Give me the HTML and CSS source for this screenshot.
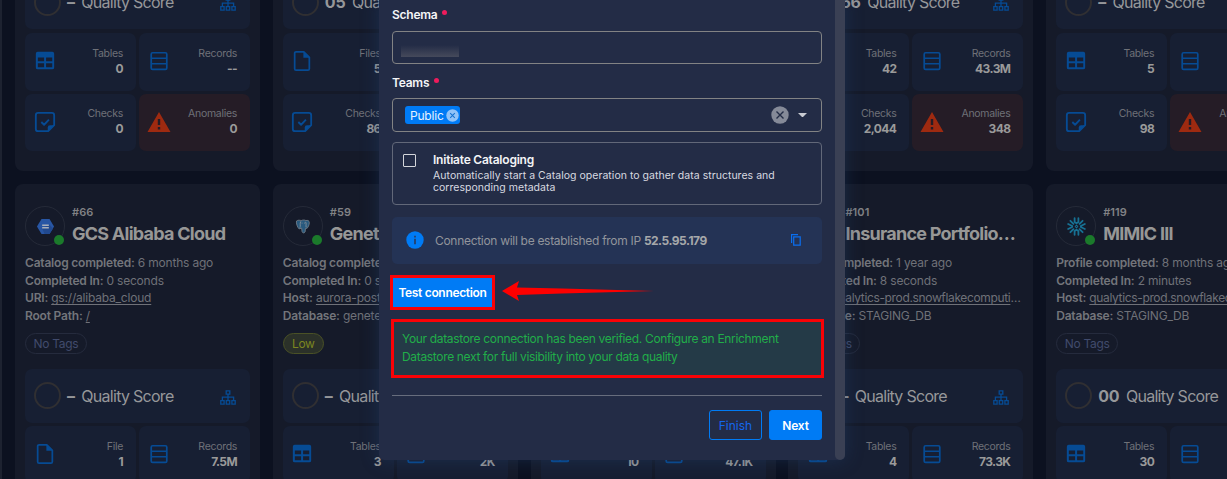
FILE: index.html
```
<!DOCTYPE html>
<html lang="en">
<head>
<meta charset="utf-8">
<title>Datastores</title>
<link rel="stylesheet" href="styles.css">
</head>
<body>
<svg class="defs" aria-hidden="true">
  <symbol id="i-table" viewBox="0 0 24 24"><path fill-rule="evenodd" d="M4.500 2h15.500A2 2 0 0 1 22 4v15a2 2 0 0 1-2 2H4a2 2 0 0 1-2-2V4a2 2 0 0 1 2-2zM4.200 8.200v4.200h6.800V8.200zM13.200 8.200v4.200h6.700V8.200zM4.200 14.500v4.200h6.800v-4.200zM13.200 14.500v4.200h6.700v-4.200z"/></symbol>
  <symbol id="i-rows" viewBox="0 0 24 24"><path fill="none" stroke="currentColor" stroke-width="1.900" d="M5 3h14a1.500 1.500 0 0 1 1.500 1.500v15.200a1.500 1.500 0 0 1-1.500 1.500H5a1.500 1.500 0 0 1-1.500-1.500V4.500A1.500 1.500 0 0 1 5 3zM3.500 9h17M3.500 15h17"/></symbol>
  <symbol id="i-file" viewBox="0 0 24 24"><path fill="none" stroke="currentColor" stroke-width="1.900" stroke-linejoin="round" d="M5.500 2h8.500l6 6v12.500a1.500 1.500 0 0 1-1.500 1.500h-13A1.500 1.500 0 0 1 4 20.500v-17A1.500 1.500 0 0 1 5.500 2z"/><path d="M13.500 2v6.500H20z"/></symbol>
  <symbol id="i-check" viewBox="0 0 24 24"><path fill="none" stroke="currentColor" stroke-width="2" stroke-linejoin="round" d="M15.500 22H4.500A2.500 2.500 0 0 1 2 19.500v-15A2.500 2.500 0 0 1 4.500 2h15A2.500 2.500 0 0 1 22 4.500v11zM8 12l3 3 5.300-5.500"/><path d="M15 22.500v-4.500a2.500 2.500 0 0 1 2.500-2.500H22.500z"/></symbol>
  <symbol id="i-warn" viewBox="0 0 24 24"><path fill-rule="evenodd" d="M12 2l11.500 20H.5zM10.800 9v6h2.400V9zM10.800 17v2.400h2.400V17z"/></symbol>
  <symbol id="i-tree" viewBox="0 0 16 15"><path fill="none" stroke="currentColor" stroke-width="1.300" d="M6.200.8h3.600v3.400H6.200zM.8 10.700h3.300v3.400H.8zM6.300 10.700h3.400v3.400H6.300zM11.900 10.700h3.300v3.400h-3.300zM8 4.200v6.500M2.400 10.700V7.200h11.200v3.500"/></symbol>
</svg>
<div class="screen">
  <main class="board">
    <div class="row row-top">
      <section class="card">
        <div class="score"><i class="ring"></i><b>–</b><span>Quality Score</span><svg><use href="#i-tree"/></svg></div>
        <div class="cells">
          <div class="cell"><svg><use href="#i-table"/></svg><p>Tables<b>0</b></p></div>
          <div class="cell"><svg><use href="#i-rows"/></svg><p>Records<b>--</b></p></div>
          <div class="cell"><svg><use href="#i-check"/></svg><p>Checks<b>0</b></p></div>
          <div class="cell bad"><svg><use href="#i-warn"/></svg><p>Anomalies<b>0</b></p></div>
        </div>
      </section>
      <section class="card">
        <div class="score"><i class="ring"></i><b>05</b><span>Quality Score</span></div>
        <div class="cells">
          <div class="cell"><svg><use href="#i-file"/></svg><p>Files<b>5</b></p></div>
          <div class="cell"></div>
          <div class="cell"><svg><use href="#i-check"/></svg><p>Checks<b>86</b></p></div>
          <div class="cell bad"></div>
        </div>
      </section>
      <section class="card"></section>
      <section class="card">
        <div class="score"><i class="ring"></i><b>66</b><span>Quality Score</span><svg><use href="#i-tree"/></svg></div>
        <div class="cells">
          <div class="cell"><svg><use href="#i-table"/></svg><p>Tables<b>42</b></p></div>
          <div class="cell"><svg><use href="#i-rows"/></svg><p>Records<b>43.3M</b></p></div>
          <div class="cell"><svg><use href="#i-check"/></svg><p>Checks<b>2,044</b></p></div>
          <div class="cell bad"><svg><use href="#i-warn"/></svg><p>Anomalies<b>348</b></p></div>
        </div>
      </section>
      <section class="card">
        <div class="score"><i class="ring"></i><b>–</b><span>Quality Score</span></div>
        <div class="cells">
          <div class="cell"><svg><use href="#i-table"/></svg><p>Tables<b>5</b></p></div>
          <div class="cell"><svg><use href="#i-rows"/></svg></div>
          <div class="cell"><svg><use href="#i-check"/></svg><p>Checks<b>98</b></p></div>
          <div class="cell bad"><svg><use href="#i-warn"/></svg><p>Anomalies<b>&nbsp;</b></p></div>
        </div>
      </section>
    </div>
    <div class="row">
      <section class="card">
        <header><div class="avatar"><svg viewBox="0 0 20 20"><path fill="#2856a4" d="M5.800 2h8.400L19 10l-4.800 8H5.800L1 10z"/><path fill="#21498f" d="M14 8l4 4-3.800 6H9L6.500 12z"/><path fill="#a9afba" d="M6.500 8h7v1.600h-7zM6.500 10.400h7V12h-7z"/></svg><i></i></div><div class="name"><small>#66</small><h2>GCS Alibaba Cloud</h2></div></header>
        <ul><li><b>Catalog completed:</b> 6 months ago</li><li><b>Completed In:</b> 0 seconds</li><li><b>URI:</b> <u>gs://alibaba_cloud</u></li><li><b>Root Path:</b> <u>/</u></li></ul>
        <span class="tag">No Tags</span>
        <div class="score"><i class="ring"></i><b>–</b><span>Quality Score</span><svg><use href="#i-tree"/></svg></div>
        <div class="cells">
          <div class="cell"><svg><use href="#i-file"/></svg><p>File<b>1</b></p></div>
          <div class="cell"><svg><use href="#i-rows"/></svg><p>Records<b>7.5M</b></p></div>
        </div>
      </section>
      <section class="card">
        <header><div class="avatar"><svg class="elephant" viewBox="0 0 20 20"><path fill="#28597e" stroke="#75808a" stroke-width="1" d="M3 3.500c2-1.500 4-.8 5.500-.5 2-.8 4-.8 5.500 0 2-.6 4 0 4 2.500 0 3-1.500 5-2.500 6.500l-2 .3-.5 4.200c-1 1.500-3 1.300-3.500-.5L9 12l-3 .8C4 11 2.300 6 3 3.500z"/><path fill="none" stroke="#8d9399" stroke-width="1" d="M8 4C6.500 7 8 9 7 11.500M13.500 4.500c1.500 2 .2 4 .8 6.500M9 6h1M12 6h1"/></svg><i></i></div><div class="name"><small>#59</small><h2>Genetech</h2></div></header>
        <ul><li><b>Catalog completed:</b></li><li><b>Completed In:</b> 0 seconds</li><li><b>Host:</b> <u>aurora-postgres</u></li><li><b>Database:</b> genetech</li></ul>
        <span class="tag low">Low</span>
        <div class="score"><i class="ring"></i><b>–</b><span>Quality Score</span></div>
        <div class="cells">
          <div class="cell"><svg><use href="#i-table"/></svg><p>Tables<b>3</b></p></div>
          <div class="cell"><svg><use href="#i-rows"/></svg><p>Records<b>2K</b></p></div>
        </div>
      </section>
      <section class="card end">
        <div class="cells">
          <div class="cell"><svg><use href="#i-table"/></svg><p>Tables<b>10</b></p></div>
          <div class="cell"><svg><use href="#i-rows"/></svg><p>Records<b>47.1K</b></p></div>
        </div>
      </section>
      <section class="card">
        <header><div class="avatar"></div><div class="name"><small>#101</small><h2>Insurance Portfolio…</h2></div></header>
        <ul><li><b>Scan completed:</b> 1 year ago</li><li><b>Completed In:</b> 8 seconds</li><li class="host"><b>Host:</b> <u>qualytics-prod.snowflakecomputi</u>…</li><li><b>Database:</b> STAGING_DB</li></ul>
        <span class="tag">No Tags</span>
        <div class="score"><i class="ring"></i><b>–</b><span>Quality Score</span><svg><use href="#i-tree"/></svg></div>
        <div class="cells">
          <div class="cell"><svg><use href="#i-table"/></svg><p>Tables<b>4</b></p></div>
          <div class="cell"><svg><use href="#i-rows"/></svg><p>Records<b>73.3K</b></p></div>
        </div>
      </section>
      <section class="card">
        <header><div class="avatar"><svg viewBox="0 0 20 20"><g fill="none" stroke="#177194" stroke-width="1.900" stroke-linecap="round" stroke-linejoin="round"><path d="M10 8.600l1.400 1.400-1.400 1.400L8.600 10z" stroke-width="1.100"/><path d="M8 1.200v4L10 6.600l2-1.400v-4M8 18.800v-4l2-1.400 2 1.400v4M1.200 7.400l4.300 2.100v1l-4.300 2.100M18.800 7.400l-4.300 2.100v1l4.300 2.100M3.600 4l3.200 3.200M16.400 4l-3.200 3.200M3.600 16l3.200-3.200M16.400 16l-3.200-3.200"/></g></svg><i></i></div><div class="name"><small>#119</small><h2>MIMIC III</h2></div></header>
        <ul><li><b>Profile completed:</b> 8 months ago</li><li><b>Completed In:</b> 2 minutes</li><li class="host"><b>Host:</b> <u>qualytics-prod.snowflakecomputi</u>…</li><li><b>Database:</b> STAGING_DB</li></ul>
        <span class="tag">No Tags</span>
        <div class="score"><i class="ring"></i><b>00</b><span>Quality Score</span></div>
        <div class="cells">
          <div class="cell"><svg><use href="#i-table"/></svg><p>Tables<b>30</b></p></div>
          <div class="cell"><svg><use href="#i-rows"/></svg></div>
        </div>
      </section>
    </div>
  </main>

  <div class="modal">
    <div class="form">
      <label class="schema">Schema<i></i></label>
      <div class="input"><span class="redacted"></span></div>
      <label class="teams">Teams<i></i></label>
      <div class="select">
        <span class="chip">Public<svg viewBox="0 0 14 14"><circle cx="7" cy="7" r="6.700" fill="#91c3f8"/><path d="M4.500 4.500l5 5M9.500 4.500l-5 5" stroke="#1673d0" stroke-width="1.100"/></svg></span>
        <svg class="clear" viewBox="0 0 18 18"><circle cx="9" cy="9" r="8.700" fill="#858a98"/><path d="M5.500 5.500l7 7M12.500 5.500l-7 7" stroke="#232c46" stroke-width="1.400"/></svg>
        <svg class="caret" viewBox="0 0 10 5"><path d="M0 0h10L5 5z" fill="#c9cbd2"/></svg>
      </div>
      <div class="option"><i class="box"></i><div><strong>Initiate Cataloging</strong><p>Automatically start a Catalog operation to gather data structures and<br>corresponding metadata</p></div></div>
      <div class="info">
        <svg class="dot" viewBox="0 0 18 18"><circle cx="9" cy="9" r="8.700" fill="#007bf5"/><path d="M8.100 7.800h1.800v5.400H8.100zM8.100 4.700h1.800v1.800H8.100z" fill="#23406f"/></svg>
        <span>Connection will be established from IP <b>52.5.95.179</b></span>
        <svg class="copy" viewBox="0 0 10 12"><path d="M.6 9V.6H7M2.700 2.800h6.500v8.400H2.700z" fill="none" stroke="#0a6ff0" stroke-width="1.200"/></svg>
      </div>
      <div class="action">
        <button class="test">Test connection</button>
        <svg class="arrow" viewBox="0 0 152 20"><path d="M0 10L17 0l-2 6.500L60 7.500l92 2.500-92 2.500L15 14l2 6z" fill="#fe0000"/></svg>
      </div>
      <div class="verified">Your datastore connection has been verified. Configure an Enrichment<br>Datastore next for full visibility into your data quality</div>
      <footer><button class="ghost">Finish</button><button class="next">Next</button></footer>
    </div>
    <div class="scrollbar"></div>
  </div>
</div>
</body>
</html>
```
FILE: styles.css
```
* { box-sizing: border-box; margin: 0; padding: 0; }
body { width: 1227px; height: 479px; overflow: hidden; background: #0c1120; font-family: Inter, sans-serif; }
.defs { display: none; }
svg { display: block; flex: none; fill: currentColor; }
.screen { position: relative; height: 479px; overflow: hidden; border-left: 2px solid #1d2230; white-space: nowrap; }

/* datastore cards, dimmed behind the dialog */
.board { display: flex; flex-direction: column; gap: 13px; padding-left: 13px; color: #6f7178; }
.row { display: grid; grid-template-columns: repeat(5, 245px); column-gap: 12.8px; height: 320px; }
.row-top { height: 171px; }
.card { background: #151a29; border-radius: 8px; padding: 22px 10px 0; }
.row-top .card { display: flex; flex-direction: column; justify-content: flex-end; padding: 0 10px 20px; border-radius: 0 0 8px 8px; min-height: 0; }
.card.end { padding-top: 239px; }
.card header { display: flex; gap: 7px; height: 40px; }
.avatar { position: relative; flex: none; display: grid; place-items: center; width: 40px; height: 40px; border: 1px solid #252a38; border-radius: 50%; }
.avatar svg { width: 19px; height: 19px; }
.avatar .elephant { width: 17px; height: 17px; }
.avatar i { position: absolute; right: 0; bottom: 0; width: 10px; height: 10px; border-radius: 50%; background: #1b7a2b; }
.name small { display: block; font-size: 11px; line-height: 13px; font-weight: 600; color: #818285; letter-spacing: .1px; }
.name h2 { margin-top: 3px; font-size: 18px; line-height: 24px; font-weight: 700; letter-spacing: -.75px; color: #979796; }
ul { list-style: none; margin-top: 8px; font-size: 12px; line-height: 17.7px; letter-spacing: -.2px; }
li b { font-weight: 600; color: #73757b; }
.host u { letter-spacing: -.35px; }
u { text-underline-offset: 2px; }
.tag { display: block; width: 62px; height: 21px; margin: 8px 0 15px; border: 1px solid #252b3d; border-radius: 11px; font-size: 12px; line-height: 19px; letter-spacing: -.3px; text-align: center; color: #414b6c; }
.low { width: 41px; background: #2b3129; border-color: #4a5126; color: #7c8620; }
.score { display: flex; align-items: center; flex: none; height: 54px; padding: 0 14px 0 9px; border-radius: 7px; background: #171f33; font-size: 16px; color: #96979a; letter-spacing: -.72px; }
.score b { margin: 0 6.500px 0 6px; font-weight: 700; letter-spacing: -.2px; }
.ring { width: 27px; height: 27px; border: 2px solid #302f32; border-radius: 50%; }
.score svg { width: 16px; height: 15px; margin: 3px 0 0 auto; color: #064b94; }
.cells { display: grid; grid-template-columns: 111px 111px; gap: 3px; margin-top: 3px; }
.row-top .cells { margin-top: 4px; }
.cell { display: flex; align-items: center; justify-content: space-between; height: 57.500px; padding: 0 13px 0 8.500px; border-radius: 7px; background: #171f33; }
.cell svg { width: 22px; height: 22px; margin-bottom: 1px; color: #064b94; }
.cell p { text-align: right; font-size: 10.500px; line-height: 15px; letter-spacing: -.3px; padding-bottom: 1px; }
.cell b { display: block; font-size: 12px; line-height: 16px; color: #9a9a9a; letter-spacing: -.6px; }
.bad { padding-left: 8px; background: #251c26; }
.bad svg { width: 24px; height: 24px; color: #9e2a10; }

/* connection dialog */
.modal { position: absolute; left: 377px; top: 0; display: flex; width: 466px; height: 460px; background: #232c46; border-radius: 0 0 5px 5px; box-shadow: 0 0 18px rgba(33, 66, 115, .42); }
.form { width: 456px; padding: 7px 13px 0; }
.scrollbar { width: 10px; background: #3a4054; border-radius: 0 0 5px 5px; }
label { display: flex; gap: 5px; height: 24px; font-size: 12px; line-height: 16px; font-weight: 600; letter-spacing: -.25px; color: #f4f5f7; }
label i { width: 5px; height: 5px; margin-top: 3px; border-radius: 50%; background: #ef1b5c; }
.teams { height: 23px; margin-top: 11px; }
.input, .select { display: flex; height: 33px; border: 1px solid #828384; border-radius: 4px; }
.redacted { width: 58px; height: 12px; margin: 13px 0 0 8px; background: linear-gradient(#232c46, #454a5b); }
.select { height: 34px; align-items: center; padding: 0 14px 0 12px; }
.chip { display: flex; align-items: center; justify-content: space-between; width: 55px; height: 18px; padding: 0 1px 0 5px; border-radius: 3px; background: #007bf5; color: #e6f2ff; font-size: 12px; letter-spacing: -.2px; }
.chip svg { width: 13px; height: 13px; }
.clear { width: 18px; margin-left: auto; }
.caret { width: 9px; margin-left: 9px; }
.option { display: flex; gap: 17px; height: 63px; margin-top: 10px; padding: 10px; border: 1px solid #626879; border-radius: 4px; color: #f3f4f6; }
.box { width: 13px; height: 13px; margin-top: 1px; border: 1px solid #d3d5da; border-radius: 1px; }
.option strong { display: block; font-size: 12px; line-height: 14px; font-weight: 600; letter-spacing: -.22px; }
.option p { margin-top: 3px; font-size: 10.500px; line-height: 12px; letter-spacing: .03px; color: #d8dae0; }
.info { display: flex; align-items: center; height: 47px; margin-top: 12px; padding: 0 21px 0 14px; border-radius: 5px; background: #243355; font-size: 12px; letter-spacing: -.3px; color: #92959c; }
.info b { font-weight: 700; letter-spacing: -.5px; color: #a6a8aa; }
.dot { width: 18px; margin: 0 11px 2px 0; }
.copy { width: 10px; margin: 0 0 2px auto; }
.action { display: flex; align-items: center; gap: 7px; margin: 11px 0 0 -2px; }
button { font-family: inherit; font-size: 12px; }
.test { width: 105px; height: 35px; border: 3px solid #f90206; background: #007bf5; color: #fff; font-weight: 600; letter-spacing: -.32px; white-space: nowrap; }
.arrow { width: 152px; height: 20px; margin-bottom: 3px; }
.verified { width: 433px; height: 59px; margin: 9px 0 0 -1px; padding: 8px 8px 0; border: 3px solid #f90206; background: #243a47; color: #21ae49; font-size: 12px; line-height: 18px; letter-spacing: -.33px; }
footer { display: flex; justify-content: flex-end; gap: 7px; margin-top: 17px; padding-top: 14px; border-top: 1px solid #676d7d; }
footer button { width: 53px; height: 30px; border: 1px solid #007bf5; border-radius: 3px; background: none; color: #1467ed; }
footer .next { background: #007bf5; color: #fff; font-weight: 600; letter-spacing: -.2px; }
```
